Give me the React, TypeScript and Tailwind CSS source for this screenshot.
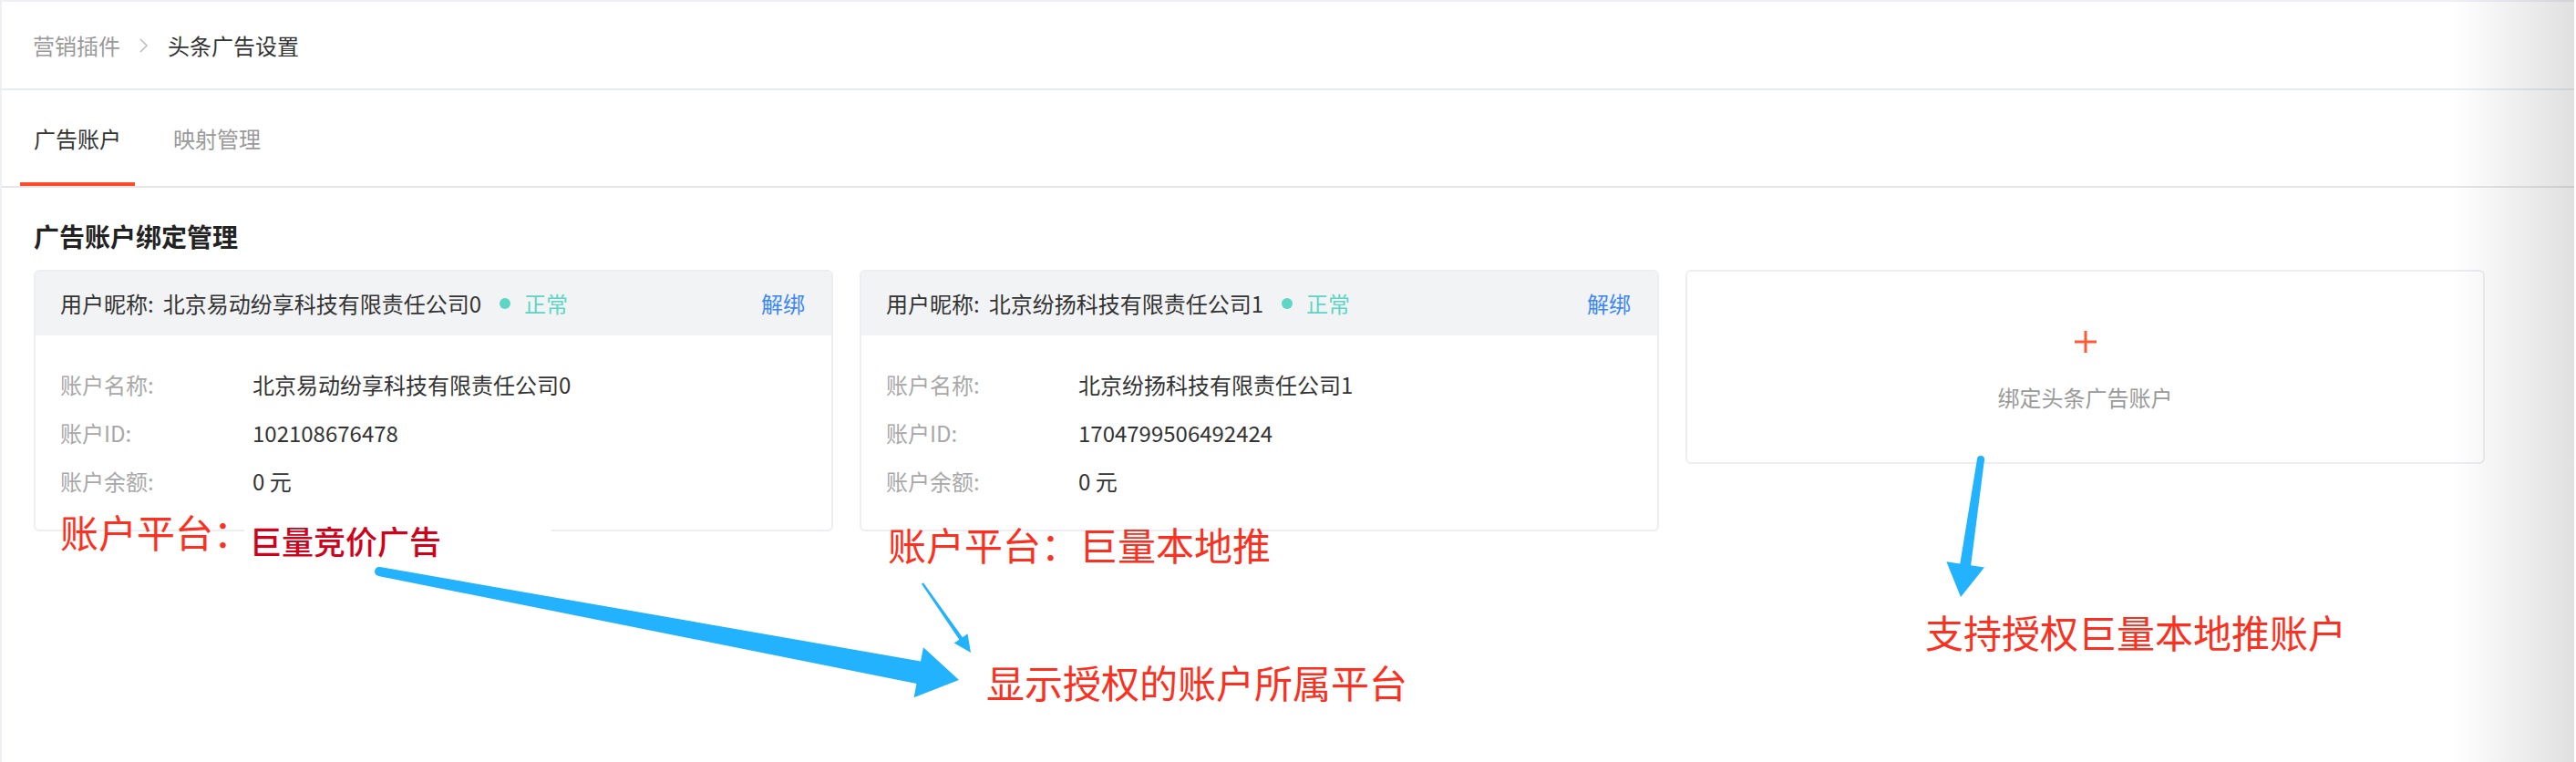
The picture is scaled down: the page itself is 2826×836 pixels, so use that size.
import React from "react";

const FONT = "font-['Noto_Sans_CJK_SC','Noto_Sans',sans-serif]";

function AccountCard({
  nick,
  name,
  id,
}: {
  nick: string;
  name: string;
  id: string;
}) {
  return (
    <div className="w-[877px] h-[287px] shrink-0 border-2 border-[#eceef3] rounded-[6px] overflow-hidden bg-white">
      <div className="h-[70px] bg-[#f2f3f5] flex items-center pl-[27px] pr-[29px] text-[24px]">
        <span className="text-[#333]">用户昵称:</span>
        <span className="ml-[10px] text-[#333]">{nick}</span>
        <span className="ml-[20px] w-[12px] h-[12px] rounded-full bg-[#5ed5c5]" />
        <span className="ml-[15px] text-[#5ed5c5]">正常</span>
        <span className="ml-auto text-[#3b87f5]">解绑</span>
      </div>
      <div className="pt-[27px] pl-[27px] text-[24px]">
        {[
          ["账户名称:", name],
          ["账户ID:", id],
          ["账户余额:", "0 元"],
        ].map(([k, v]) => (
          <div key={k} className="h-[53px] flex items-center">
            <span className="w-[211px] text-[#a8a8a8]">{k}</span>
            <span className="text-[#333]">{v}</span>
          </div>
        ))}
      </div>
    </div>
  );
}

export default function App() {
  return (
    <div className={`relative w-[2826px] h-[836px] bg-white overflow-hidden ${FONT}`}>
      <div className="h-full border-l-2 border-t-2 border-[#eef0f5]">
        {/* breadcrumb */}
        <div className="h-[97px] border-b-2 border-[#e9edf3] flex items-center pl-[34px] text-[24px]">
          <span className="text-[#9a9a9a]">营销插件</span>
          <svg className="ml-[20px] mr-[20px]" width="12" height="18" viewBox="0 0 12 18">
            <path d="M2 2 L9 9 L2 16" fill="none" stroke="#bdbdbd" strokeWidth="1.6" />
          </svg>
          <span className="text-[#333]">头条广告设置</span>
        </div>
        {/* tabs */}
        <div className="h-[107px] border-b-2 border-[#e6e6e6] flex items-stretch text-[24px]">
          <div className="relative ml-[20px] w-[126px] flex items-center justify-center text-[#333]">
            广告账户
            <div className="absolute left-0 right-0 bottom-0 h-[4px] bg-[#ff4d2a]" />
          </div>
          <div className="ml-[27px] w-[126px] flex items-center justify-center text-[#9a9a9a]">
            映射管理
          </div>
        </div>
        {/* content */}
        <div className="pl-[35px]">
          <div className="mt-[33px] h-[40px] flex items-center text-[28px] font-bold text-[#222]">
            广告账户绑定管理
          </div>
          <div className="mt-[17px] flex items-start gap-[29px]">
            <AccountCard nick="北京易动纷享科技有限责任公司0" name="北京易动纷享科技有限责任公司0" id="102108676478" />
            <AccountCard nick="北京纷扬科技有限责任公司1" name="北京纷扬科技有限责任公司1" id="1704799506492424" />
            <div className="w-[877px] h-[213px] shrink-0 border-2 border-[#eceef3] rounded-[6px] flex flex-col items-center pt-[64px]">
              <svg width="26" height="26" viewBox="0 0 26 26">
                <path d="M13 1 V25 M1 13 H25" stroke="#ff5a36" strokeWidth="3" />
              </svg>
              <div className="mt-[32px] text-[24px] text-[#9a9a9a] leading-[32px]">绑定头条广告账户</div>
            </div>
          </div>
        </div>
      </div>

      {/* annotations */}
      <div className="absolute left-[66px] top-[562px] text-[42px] leading-none text-[#fb3020]">账户平台：</div>
      <div className="absolute left-[268px] top-[575px] w-[337px] h-[44px] bg-white pl-[6px] text-[35px] leading-none font-medium text-[#d0021b]">
        巨量竞价广告
      </div>
      <div className="absolute left-[974px] top-[576px] text-[42px] leading-none text-[#fb3020]">账户平台：巨量本地推</div>
      <div className="absolute left-[1082px] top-[727px] text-[42px] leading-none text-[#fb3020]">显示授权的账户所属平台</div>
      <div className="absolute left-[2112px] top-[672px] text-[42px] leading-none text-[#fb3020]">支持授权巨量本地推账户</div>

      <svg className="absolute left-0 top-0 pointer-events-none" width="2826" height="836" viewBox="0 0 2826 836">
        <g fill="#23b2fd">
          <path d="M416.92 622.09 L1010.07 725.43 L1012.92 710.2 L1052 746 L1002.62 765.24 L1005.47 750.01 L415.08 631.91 Z" />
          <circle cx="416" cy="627" r="5" />
          <path d="M1012.98 639.31 L1055.93 699.16 L1061.51 695.27 L1065 716 L1046.75 705.57 L1052.33 701.68 L1011.02 640.69 Z" />
          <path d="M2176.96 504.58 L2162.13 620.24 L2176.97 622.4 L2151 655 L2135.41 616.34 L2150.25 618.5 L2169.04 503.42 Z" />
          <circle cx="2173" cy="504" r="4" />
        </g>
      </svg>

      {/* right edge shading */}
      <div className="absolute top-0 right-[2px] h-full w-[134px] bg-linear-to-r from-[rgba(0,0,0,0)] to-[rgba(0,0,0,0.12)] pointer-events-none" />
      <div className="absolute top-0 right-0 h-full w-[2px] bg-white" />
    </div>
  );
}
